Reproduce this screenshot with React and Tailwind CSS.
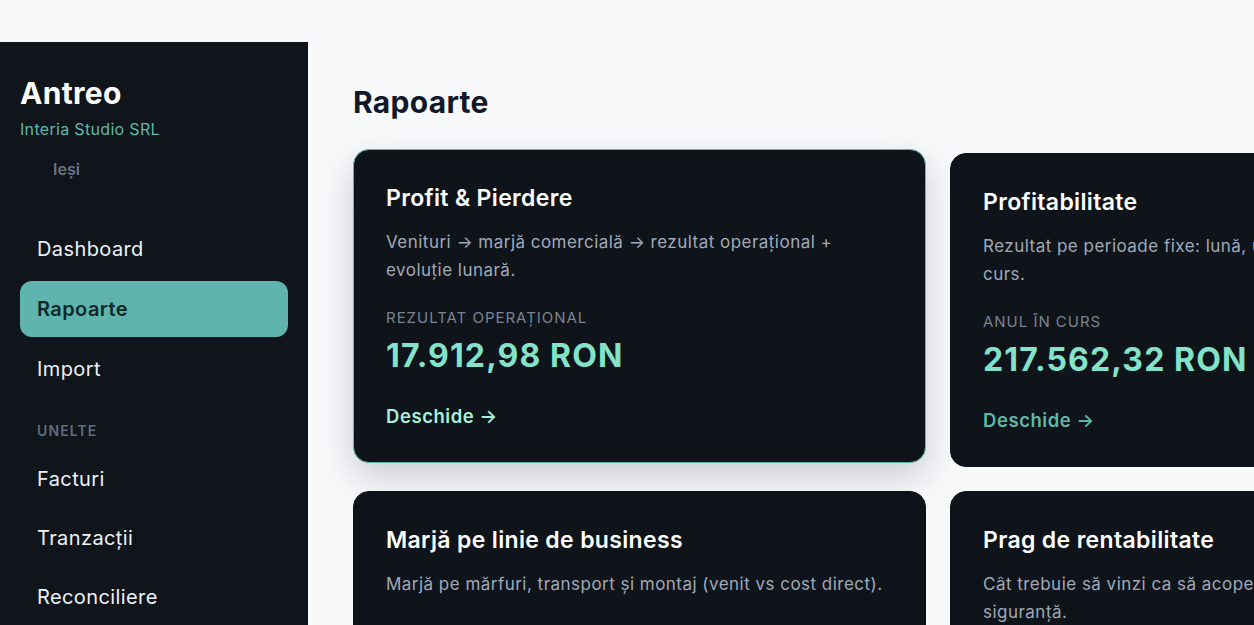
import React from 'react';

const nav = [
  { label: 'Dashboard' },
  { label: 'Rapoarte', active: true },
  { label: 'Import' },
];

const tools = ['Facturi', 'Tranzacții', 'Reconciliere'];

const cards = [
  {
    title: 'Profit & Pierdere',
    desc: 'Venituri → marjă comercială → rezultat operațional + evoluție lunară.',
    label: 'Rezultat operațional',
    value: '17.912,98 RON',
    hover: true,
  },
  {
    title: 'Profitabilitate',
    desc: 'Rezultat pe perioade fixe: lună, ultimul trimestru, anul în curs.',
    label: 'Anul în curs',
    value: '217.562,32 RON',
  },
  {
    title: 'Marjă pe linie de business',
    desc: 'Marjă pe mărfuri, transport și montaj (venit vs cost direct).',
  },
  {
    title: 'Prag de rentabilitate',
    desc: 'Cât trebuie să vinzi ca să acoperi costurile, cu marjă de siguranță.',
  },
];

const ReportCard = ({ card }) => (
  <div
    className={
      card.hover
        ? 'rounded-2xl bg-[#0f141a] border border-[#5fb5aa] px-8 pt-8 pb-8 -translate-y-1 shadow-[0_14px_36px_rgba(15,23,42,0.2)]'
        : 'rounded-2xl bg-[#0f141a] border border-[#0f141a] px-8 pt-8 pb-8'
    }
  >
    <h3 className="text-[23px] leading-8 font-semibold tracking-[0.015em] text-white">{card.title}</h3>
    <p className="mt-3.5 text-[17px] leading-7 tracking-[0.028em] text-[#a1a9b8]">{card.desc}</p>
    {card.value && (
      <>
        <div className="mt-6 text-[15px] leading-5 uppercase tracking-[0.065em] text-[#7a8391]">{card.label}</div>
        <div className="mt-2.5 text-[32px] leading-9 font-bold tracking-[0.035em] text-[#83e2c9]">{card.value}</div>
        <div
          className={
            card.hover
              ? 'mt-7 text-[18.5px] leading-7 font-semibold tracking-[0.03em] text-[#a8f0dd]'
              : 'mt-7 text-[18.5px] leading-7 font-semibold tracking-[0.03em] text-[#5fb8a7]'
          }
        >
          Deschide →
        </div>
      </>
    )}
  </div>
);

export default function App() {
  return (
    <div className="min-h-screen bg-[#f8f9fb] pt-[42px] overflow-hidden" style={{ fontFamily: 'Inter, "Noto Sans", sans-serif' }}>
      <div className="flex">
        <aside className="w-[308px] shrink-0 h-[583px] bg-[#0f151b] pl-5 pr-5 pt-[33px]">
          <div className="text-[30px] leading-9 font-bold tracking-[0.01em] text-white">Antreo</div>
          <div className="mt-[6px] text-base leading-6 tracking-[0.02em] text-[#5fb8a8]">Interia Studio SRL</div>
          <div className="mt-4 pl-[33px] text-base leading-6 font-semibold text-[#6b7385]">Ieși</div>
          <nav className="mt-[40px] flex flex-col gap-1">
            {nav.map((item) => (
              <div
                key={item.label}
                className={
                  item.active
                    ? 'h-14 flex items-center pl-[17px] rounded-xl bg-[#5fb5ad] text-xl font-semibold tracking-[0.02em] text-[#0d2a28]'
                    : 'h-14 flex items-center pl-[17px] rounded-xl text-xl tracking-[0.02em] text-[#eef1f5]'
                }
              >
                {item.label}
              </div>
            ))}
            <div className="pl-[17px] mt-[20px] mb-[7px] text-sm leading-5 font-semibold tracking-[0.08em] text-[#626b7c]">UNELTE</div>
            {tools.map((t) => (
              <div key={t} className="h-14 -mt-[1px] flex items-center pl-[17px] rounded-xl text-xl tracking-[0.02em] text-[#eef1f5]">
                {t}
              </div>
            ))}
          </nav>
        </aside>
        <main className="flex-1 pl-[45px] pt-[42px]">
          <h1 className="text-[30px] leading-9 font-bold tracking-[0.01em] text-[#111827]">Rapoarte</h1>
          <div className="mt-[33px] grid grid-cols-[573px_573px] gap-6">
            {cards.map((c) => (
              <ReportCard key={c.title} card={c} />
            ))}
          </div>
        </main>
      </div>
    </div>
  );
}
